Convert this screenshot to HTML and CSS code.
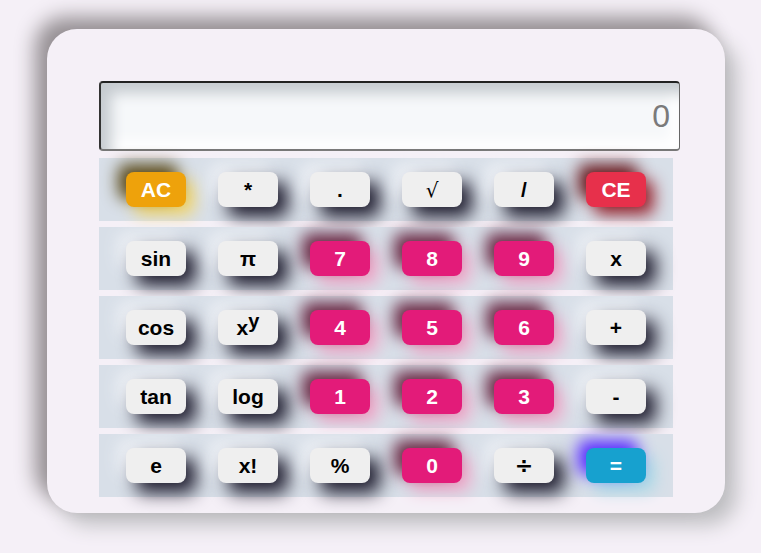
FILE: index.html
```html
<!DOCTYPE html>
<html>
<head>
<meta charset="utf-8">
<link rel="stylesheet" href="styles.css">
</head>
<body>
<div class="calc">
  <div class="display">0</div>
  <div class="row">
    <button class="btn ac">AC</button>
    <button class="btn">*</button>
    <button class="btn">.</button>
    <button class="btn sqrt">√</button>
    <button class="btn">/</button>
    <button class="btn ce">CE</button>
  </div>
  <div class="row">
    <button class="btn">sin</button>
    <button class="btn">π</button>
    <button class="btn num">7</button>
    <button class="btn num">8</button>
    <button class="btn num">9</button>
    <button class="btn">x</button>
  </div>
  <div class="row">
    <button class="btn">cos</button>
    <button class="btn">x<sup>y</sup></button>
    <button class="btn num">4</button>
    <button class="btn num">5</button>
    <button class="btn num">6</button>
    <button class="btn">+</button>
  </div>
  <div class="row">
    <button class="btn">tan</button>
    <button class="btn">log</button>
    <button class="btn num">1</button>
    <button class="btn num">2</button>
    <button class="btn num">3</button>
    <button class="btn">-</button>
  </div>
  <div class="row">
    <button class="btn">e</button>
    <button class="btn">x!</button>
    <button class="btn">%</button>
    <button class="btn num">0</button>
    <button class="btn div">÷</button>
    <button class="btn eq">=</button>
  </div>
</div>
</body>
</html>
```
FILE: styles.css
```css
html, body {
  margin: 0;
  padding: 0;
}
body {
  background: #f5f0f7;
  font-family: "Liberation Sans", Arial, sans-serif;
  padding: 29px 0 0 47px;
  height: 553px;
  box-sizing: border-box;
}
.calc {
  width: 678px;
  height: 484px;
  box-sizing: border-box;
  background: #f5f0f7;
  border-radius: 30px;
  padding: 52px 52px 0 52px;
  display: flex;
  flex-direction: column;
  gap: 6px;
  box-shadow: -12px -12px 20px #958f93, 12px 12px 20px #bfbfc2;
}
.display {
  width: 581px;
  height: 70px;
  box-sizing: border-box;
  border-radius: 4px;
  border-style: solid;
  border-width: 2px 1.5px 2px 2px;
  border-color: #222 #666 #777 #333;
  background: #f6f8fa;
  box-shadow: inset 10px 10px 14px #c5cacf, inset -8px -8px 14px #ffffff;
  color: #7a7a7a;
  font-size: 32px;
  text-align: right;
  line-height: 66px;
  padding-right: 9px;
  margin-bottom: 1px;
}
.row {
  width: 574px;
  height: 63px;
  box-sizing: border-box;
  background: #d8dfe8;
  display: flex;
  align-items: center;
  padding: 0 27px;
  gap: 32px;
}
.btn {
  width: 60px;
  height: 35px;
  flex: none;
  border: none;
  border-radius: 8px;
  background: #efefef;
  color: #000;
  font-family: "Liberation Sans Narrow", "Liberation Sans", Arial, sans-serif;
  font-weight: bold;
  font-size: 21px;
  padding: 0;
  box-shadow: 10px 10px 18px #1e1c2e, -8px -8px 16px #eef1f6;
}
.btn sup {
  font-size: 20px;
  vertical-align: 0;
  position: relative;
  top: -7px;
}
.sqrt {
  font-family: "DejaVu Sans", sans-serif;
  font-weight: normal;
  font-size: 20px;
}
.div {
  font-family: "DejaVu Sans", sans-serif;
  font-size: 22px;
}
.num {
  background: #e31b79;
  color: #fff;
  box-shadow: -8px -8px 16px #6a2a45, 8px 8px 16px #f0a6c8;
}
.ac {
  background: #eea20b;
  color: #fff;
  box-shadow: -8px -8px 16px #5a4a1c, 8px 8px 16px #f2d568;
}
.ce {
  background: #e7304b;
  color: #fff;
  box-shadow: -8px -8px 16px #6a1d22, 8px 8px 16px #9b2a35;
}
.eq {
  background: #17a1cf;
  color: #fff;
  box-shadow: -8px -8px 16px #5a2eff, 8px 8px 16px #a3d7e6;
}
```
